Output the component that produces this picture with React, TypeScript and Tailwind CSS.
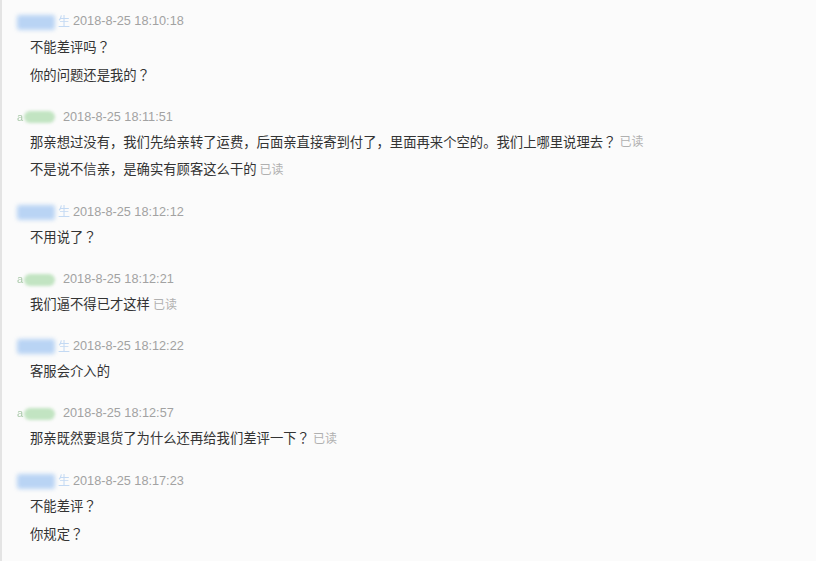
import React from "react";

type Msg = {
  who: "buyer" | "seller";
  time: string;
  lines: { text: string; read?: boolean }[];
};

const messages: Msg[] = [
  { who: "buyer", time: "2018-8-25 18:10:18", lines: [{ text: "不能差评吗？" }, { text: "你的问题还是我的？" }] },
  {
    who: "seller",
    time: "2018-8-25 18:11:51",
    lines: [
      { text: "那亲想过没有，我们先给亲转了运费，后面亲直接寄到付了，里面再来个空的。我们上哪里说理去？", read: true },
      { text: "不是说不信亲，是确实有顾客这么干的", read: true },
    ],
  },
  { who: "buyer", time: "2018-8-25 18:12:12", lines: [{ text: "不用说了？" }] },
  { who: "seller", time: "2018-8-25 18:12:21", lines: [{ text: "我们逼不得已才这样", read: true }] },
  { who: "buyer", time: "2018-8-25 18:12:22", lines: [{ text: "客服会介入的" }] },
  { who: "seller", time: "2018-8-25 18:12:57", lines: [{ text: "那亲既然要退货了为什么还再给我们差评一下？", read: true }] },
  { who: "buyer", time: "2018-8-25 18:17:23", lines: [{ text: "不能差评？" }, { text: "你规定？" }] },
];

// the fullwidth question mark sits centred in its cell in the original font
function MsgText({ text }: { text: string }) {
  const parts = text.split("？");
  return (
    <span>
      {parts.map((p, i) => (
        <React.Fragment key={i}>
          {p}
          {i < parts.length - 1 && <span style={{ fontFamily: '"Noto Sans CJK TC", sans-serif' }}>？</span>}
        </React.Fragment>
      ))}
    </span>
  );
}

// names are blurred out in the screenshot
function BlurredName({ who }: { who: Msg["who"] }) {
  if (who === "buyer") {
    return (
      <span className="flex items-center w-[56px] h-[22px]">
        <span className="block w-[38px] h-[15px] rounded-[3px] bg-[#b9d4f4] blur-[2px]" />
        <span className="ml-[3px] text-[12px] leading-none text-[#c3d9f3] blur-[0.6px]">生</span>
      </span>
    );
  }
  return (
    <span className="flex items-center w-[46px] h-[22px]">
      <span className="text-[11px] leading-none text-[#a9c9a9] blur-[0.4px]">a</span>
      <span className="block w-[31px] h-[12px] rounded-full bg-[#c2e4c2] blur-[1.5px] ml-[1px]" />
    </span>
  );
}

export default function App() {
  return (
    <div
      className="w-[816px] h-[561px] overflow-hidden bg-[#fbfbfb] border-l-2 border-[#e4e4e4]"
      style={{ fontFamily: '"Liberation Sans", "Noto Sans CJK SC", sans-serif' }}
    >
      <div className="flex flex-col gap-[17.2px] pt-[11px] pl-[15px]">
        {messages.map((m, i) => (
          <div key={i} className="flex flex-col">
            <div className="flex items-center h-[22px]">
              <BlurredName who={m.who} />
              <span className="text-[12.7px] text-[#a2a2a2]">{m.time}</span>
            </div>
            {m.lines.map((l, j) => (
              <div key={j} className="flex items-center h-[28px] pl-[13px] text-[13.33px] text-[#333333]">
                <MsgText text={l.text} />
                {l.read && <span className="ml-[3px] text-[12px] text-[#b0b0b0]">已读</span>}
              </div>
            ))}
          </div>
        ))}
      </div>
    </div>
  );
}
